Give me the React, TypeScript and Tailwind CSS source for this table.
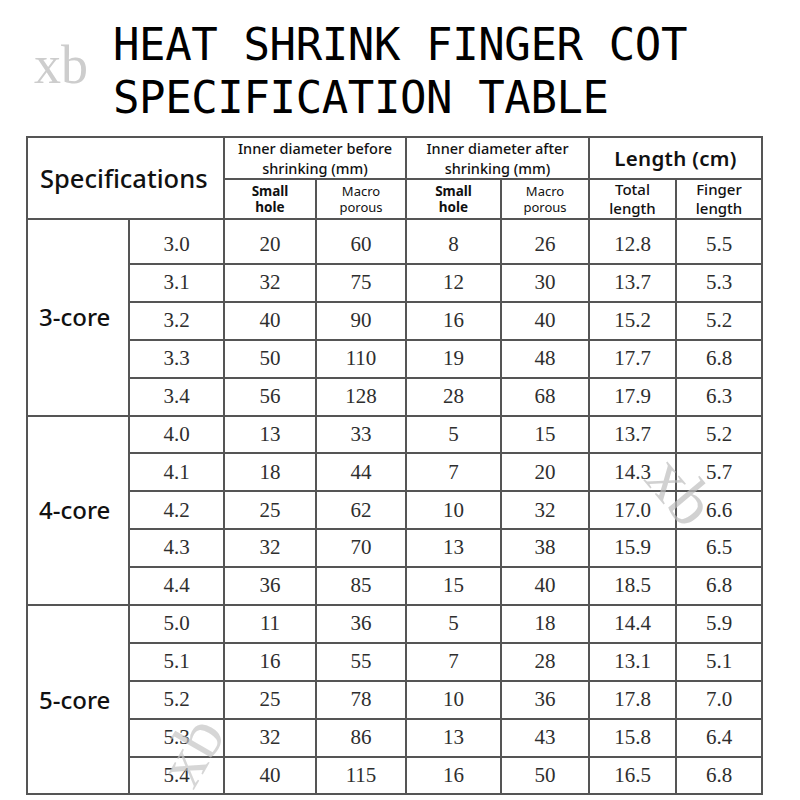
import React from 'react';

type Row = [string, string, string, string, string, string, string];

const groups: { label: string; rows: Row[] }[] = [
  {
    label: '3-core',
    rows: [
      ['3.0', '20', '60', '8', '26', '12.8', '5.5'],
      ['3.1', '32', '75', '12', '30', '13.7', '5.3'],
      ['3.2', '40', '90', '16', '40', '15.2', '5.2'],
      ['3.3', '50', '110', '19', '48', '17.7', '6.8'],
      ['3.4', '56', '128', '28', '68', '17.9', '6.3'],
    ],
  },
  {
    label: '4-core',
    rows: [
      ['4.0', '13', '33', '5', '15', '13.7', '5.2'],
      ['4.1', '18', '44', '7', '20', '14.3', '5.7'],
      ['4.2', '25', '62', '10', '32', '17.0', '6.6'],
      ['4.3', '32', '70', '13', '38', '15.9', '6.5'],
      ['4.4', '36', '85', '15', '40', '18.5', '6.8'],
    ],
  },
  {
    label: '5-core',
    rows: [
      ['5.0', '11', '36', '5', '18', '14.4', '5.9'],
      ['5.1', '16', '55', '7', '28', '13.1', '5.1'],
      ['5.2', '25', '78', '10', '36', '17.8', '7.0'],
      ['5.3', '32', '86', '13', '43', '15.8', '6.4'],
      ['5.4', '40', '115', '16', '50', '16.5', '6.8'],
    ],
  },
];

const cell = 'border-2 border-[#555] text-center align-middle p-0';
const sans = "font-['Noto_Sans',sans-serif]";

export default function App() {
  return (
    <div className="relative w-[800px] h-[800px] bg-white overflow-hidden">
      <div className="flex items-start pt-[18px] pl-[34px]">
        <span className="font-['Liberation_Serif',serif] text-[54px] leading-none text-[#cdcdcd] mt-[20px] w-[79px]">
          xb
        </span>
        <h1 className="font-['DejaVu_Sans_Mono',monospace] text-[44px] leading-[53px] text-black tracking-[-0.4px] font-normal">
          HEAT SHRINK FINGER COT
          <br />
          SPECIFICATION TABLE
        </h1>
      </div>

      <table className="absolute left-[26px] top-[136px] border-collapse table-fixed w-[735px] border-2 border-[#555]">
        <colgroup>
          <col className="w-[102px]" />
          <col className="w-[95px]" />
          <col className="w-[92px]" />
          <col className="w-[90px]" />
          <col className="w-[95px]" />
          <col className="w-[88px]" />
          <col className="w-[87px]" />
          <col className="w-[86px]" />
        </colgroup>
        <thead className={`${sans} text-[#111]`}>
          <tr className="h-[42px]">
            <th colSpan={2} rowSpan={2} className={`${cell} text-[25.5px] font-medium text-left pl-[12px]`}>
              Specifications
            </th>
            <th colSpan={2} className={`${cell} text-[14.5px] leading-[20px] font-medium`}>
              Inner diameter before
              <br />
              shrinking (mm)
            </th>
            <th colSpan={2} className={`${cell} text-[14.5px] leading-[20px] font-medium`}>
              Inner diameter after
              <br />
              shrinking (mm)
            </th>
            <th colSpan={2} className={`${cell} text-[20.5px] font-semibold tracking-[0.3px]`}>
              Length (cm)
            </th>
          </tr>
          <tr className="h-[39px]">
            <th className={`${cell} text-[13.5px] leading-[16px] font-bold`}>
              Small
              <br />
              hole
            </th>
            <th className={`${cell} text-[13px] leading-[16px] font-normal`}>
              Macro
              <br />
              porous
            </th>
            <th className={`${cell} text-[13.5px] leading-[16px] font-bold`}>
              Small
              <br />
              hole
            </th>
            <th className={`${cell} text-[13px] leading-[16px] font-normal`}>
              Macro
              <br />
              porous
            </th>
            <th className={`${cell} text-[15px] leading-[19px] font-medium`}>
              Total
              <br />
              length
            </th>
            <th className={`${cell} text-[15px] leading-[19px] font-medium`}>
              Finger
              <br />
              length
            </th>
          </tr>
        </thead>
        <tbody className="font-['Liberation_Serif',serif] text-[21px] text-[#2e2e2e]">
          {groups.map((g, gi) =>
            g.rows.map((r, ri) => (
              <tr key={r[0]} className={gi === 0 && ri === 0 ? 'h-[45px]' : 'h-[37.9px]'}>
                {ri === 0 && (
                  <td rowSpan={5} className={`${cell} ${sans} text-[24px] font-medium text-[#111] text-left pl-[11px]`}>
                    {g.label}
                  </td>
                )}
                {r.map((v, ci) => (
                  <td key={ci} className={`${cell} ${gi === 0 && ri === 0 ? 'pt-[6px]' : ''}`}>
                    {v}
                  </td>
                ))}
              </tr>
            ))
          )}
        </tbody>
      </table>

      <span aria-hidden="true" className="absolute left-[648px] top-[458px] font-['Liberation_Serif',serif] text-[66px] leading-none text-[#bdbdbd]/70 rotate-[50deg] origin-center pointer-events-none">
        xb
      </span>
      <span aria-hidden="true" className="absolute left-[158px] top-[718px] font-['Liberation_Serif',serif] text-[66px] leading-none text-[#c4c4c4]/70 -rotate-[60deg] origin-center pointer-events-none">
        xb
      </span>
    </div>
  );
}
